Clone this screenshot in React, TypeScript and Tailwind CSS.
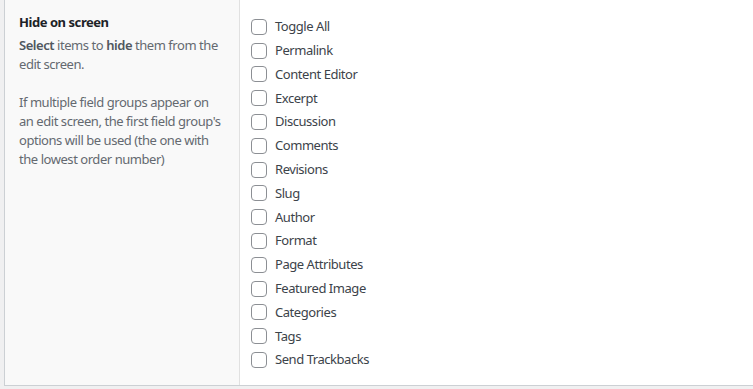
const items = [
  "Toggle All",
  "Permalink",
  "Content Editor",
  "Excerpt",
  "Discussion",
  "Comments",
  "Revisions",
  "Slug",
  "Author",
  "Format",
  "Page Attributes",
  "Featured Image",
  "Categories",
  "Tags",
  "Send Trackbacks",
];

const App = () => {
  return (
    <div className="w-[753px] h-[389px] bg-[#f0f0f1] overflow-hidden font-['Noto_Sans',sans-serif] text-[13px] tracking-[-0.45px]">
      <div className="ml-[4px] h-[386px] flex bg-white border-l border-b border-[#ccd0d4]">
        <div className="w-[235px] shrink-0 bg-[#f9f9f9] border-r border-[#e1e1e1] pl-[14px] pt-[13px] whitespace-nowrap">
          <div className="font-bold text-[#1d2327] leading-[19px]">Hide on screen</div>
          <p className="mt-[4px] text-[#646970] leading-[19px]">
            <strong className="text-[#50575e] font-semibold">Select</strong> items to{" "}
            <strong className="text-[#50575e] font-semibold">hide</strong> them from the
            <br />
            edit screen.
          </p>
          <p className="mt-[19px] text-[#646970] leading-[19px]">
            If multiple field groups appear on
            <br />
            an edit screen, the first field group's
            <br />
            options will be used (the one with
            <br />
            the lowest order number)
          </p>
        </div>
        <div className="flex-1 pl-[11px] pt-[15px]">
          <ul className="flex flex-col">
            {items.map((item) => (
              <li key={item} className="h-[23.8px] flex items-center text-[#3c434a]">
                <span className="w-[16px] h-[16px] border border-[#8c8f94] rounded-[4px] bg-white mr-[8px]" />
                {item}
              </li>
            ))}
          </ul>
        </div>
      </div>
    </div>
  );
};

export default App;
